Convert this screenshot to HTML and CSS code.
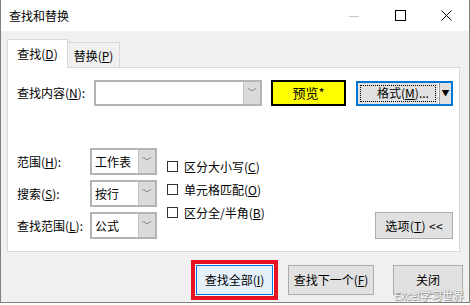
FILE: index.html
```html
<!DOCTYPE html>
<html lang="zh-CN">
  <head>
    <meta charset="UTF-8" />
    <title>查找和替换</title>
    <link rel="stylesheet" href="styles.css">
  </head>
  <body>
    <div class="window">
      <!-- Title bar -->
      <div class="titlebar">
        <span class="title">查找和替换</span>
        <div class="controls">
          <span class="ctl"><svg width="10" height="10" viewBox="0 0 10 10"><path d="M0 5.5h10" stroke="#c8c8c8" stroke-width="1"/></svg></span>
          <span class="ctl"><svg width="11" height="11" viewBox="0 0 11 11"><rect x="0.5" y="0.5" width="10" height="10" fill="none" stroke="#000" stroke-width="1"/></svg></span>
          <span class="ctl"><svg width="11" height="11" viewBox="0 0 11 11"><path d="M0.5 0.5l10 10M10.5 0.5l-10 10" stroke="#000" stroke-width="1"/></svg></span>
        </div>
      </div>

      <div class="main">
        <!-- Tabs -->
        <div class="tabs">
          <div class="tab active">查找(<u>D</u>)</div>
          <div class="tab">替换(<u>P</u>)</div>
        </div>

        <div class="panel">
          <div class="find-row">
            <label class="label">查找内容(<u>N</u>):</label>
            <div class="combo find-combo">
              <span class="combo-text"></span>
              <span class="combo-btn">﹀</span>
            </div>
            <div class="preview">预览*</div>
            <div class="format-btn">
              <span class="format-main"><span class="focus">格式(<u>M</u>)...</span></span>
              <span class="format-arrow">▼</span>
            </div>
          </div>

          <div class="options">
            <div class="selects">
              <label class="label">范围(<u>H</u>):</label>
              <div class="combo"><span class="combo-text">工作表</span><span class="combo-btn">﹀</span></div>
              <label class="label">搜索(<u>S</u>):</label>
              <div class="combo"><span class="combo-text">按行</span><span class="combo-btn">﹀</span></div>
              <label class="label">查找范围(<u>L</u>):</label>
              <div class="combo"><span class="combo-text">公式</span><span class="combo-btn">﹀</span></div>
            </div>

            <div class="checks">
              <div class="check"><span class="box"></span>区分大小写(<u>C</u>)</div>
              <div class="check"><span class="box"></span>单元格匹配(<u>O</u>)</div>
              <div class="check"><span class="box"></span>区分全/半角(<u>B</u>)</div>
            </div>

            <div class="btn options-btn">选项(<u>T</u>) &lt;&lt;</div>
          </div>
        </div>

        <!-- Dialog buttons -->
        <div class="buttons">
          <div class="highlight"><div class="btn default">查找全部(<u>I</u>)</div></div>
          <div class="btn next">查找下一个(<u>F</u>)</div>
          <div class="btn close">关闭</div>
        </div>
      </div>

      <div class="watermark">Excel学习世界</div>
    </div>
  </body>
</html>
```

FILE: styles.css
```css
html,
body {
  margin: 0;
  padding: 0;
  background: #fff;
}
body {
  font-family: "Noto Sans CJK SC", "Noto Sans", sans-serif;
  font-size: 12px;
  color: #000;
  line-height: 16px;
}
u {
  text-decoration-thickness: 1px;
  text-underline-offset: 1px;
}
.window {
  position: relative;
  width: 470px;
  height: 303px;
  box-sizing: border-box;
  border-left: 1px solid #808080;
  border-right: 1px solid #808080;
  border-bottom: 1px solid #808080;
  display: flex;
  flex-direction: column;
  background: #f0f0f0;
}
.titlebar {
  height: 31px;
  background: #fff;
  display: flex;
  align-items: center;
  padding-left: 8px;
}
.title {
  flex: 1;
}
.controls {
  display: flex;
  align-items: center;
}
.ctl {
  width: 46px;
  display: flex;
  justify-content: center;
}
.ctl svg {
  display: block;
}
.main {
  flex: 1;
  padding: 9px 6px 0 6px;
}
.tabs {
  display: flex;
  align-items: flex-end;
  height: 27px;
}
.tab {
  height: 25px;
  border: 1px solid #d9d9d9;
  border-bottom: none;
  box-sizing: border-box;
  display: flex;
  align-items: center;
  justify-content: center;
  white-space: nowrap;
}
.tab.active {
  height: 29px;
  width: 61px;
  background: #fff;
  margin-bottom: -1px;
  position: relative;
  z-index: 1;
  padding-bottom: 1px;
}
.tab:not(.active) {
  border-left: none;
  width: 52px;
  padding-top: 1px;
}
.panel {
  width: 453px;
  height: 185px;
  box-sizing: border-box;
  background: #fff;
  border: 1px solid #d9d9d9;
  padding: 12px 6px 0 9px;
}
.find-row {
  display: flex;
  align-items: center;
  height: 26px;
}
.find-row .label {
  width: 77px;
}
.combo {
  display: flex;
  height: 27px;
  box-sizing: border-box;
  border: 2px solid #b4b4b4;
  background: #fff;
}
.find-combo {
  width: 168px;
  height: 26px;
}
.combo-text {
  flex: 1;
  padding-left: 3px;
  display: flex;
  align-items: center;
}
.combo-btn {
  width: 16px;
  background: #dadada;
  border-left: 1px solid #c4c4c4;
  color: #707070;
  font-size: 9px;
  display: flex;
  align-items: center;
  justify-content: center;
}
.preview {
  margin-left: 9px;
  width: 75px;
  height: 26px;
  box-sizing: border-box;
  background: #ffff00;
  border: 2px solid #000;
  display: flex;
  align-items: center;
  justify-content: center;
  font-size: 13px;
}
.format-btn {
  margin-left: 10px;
  width: 97px;
  height: 25px;
  box-sizing: border-box;
  border: 2px solid #0078d7;
  background: #e1e1e1;
  display: flex;
}
.format-main {
  flex: 1;
  padding: 2px;
  border-right: 1px solid #fff;
  display: flex;
}
.focus {
  flex: 1;
  border: 1px dotted #000;
  display: flex;
  align-items: center;
  justify-content: center;
  padding-left: 10px;
}
.format-arrow {
  width: 11px;
  font-size: 8px;
  display: flex;
  align-items: center;
  justify-content: center;
  border-left: 1px solid #a0a0a0;
}
.options {
  display: flex;
  margin-top: 42px;
  height: 92px;
}
.selects {
  display: grid;
  grid-template-columns: 73px 67px;
  grid-auto-rows: 27px;
  row-gap: 5px;
  align-items: center;
}
.checks {
  margin-left: 10px;
  padding-top: 7px;
  display: flex;
  flex-direction: column;
}
.check {
  height: 23px;
  display: flex;
  align-items: center;
}
.box {
  width: 11px;
  height: 11px;
  box-sizing: border-box;
  border: 1px solid #333;
  background: #fff;
  margin-right: 6px;
}
.btn {
  box-sizing: border-box;
  background: #e1e1e1;
  border: 1px solid #adadad;
  display: flex;
  align-items: center;
  justify-content: center;
}
.options-btn {
  margin-left: auto;
  align-self: flex-end;
  margin-bottom: 1px;
  width: 78px;
  height: 27px;
  letter-spacing: 0.3px;
}
.buttons {
  display: flex;
  align-items: center;
  margin-top: 13px;
  padding-left: 184px;
}
.highlight {
  border: 4px solid #e81123;
  padding: 1px;
  background: #fff;
  margin: -5px 0;
}
.btn.default {
  width: 77px;
  height: 30px;
  background: #e5f1fb;
  border-color: #0078d7;
}
.btn.next {
  width: 91px;
  height: 30px;
  margin-left: 10px;
}
.btn.close {
  width: 74px;
  height: 30px;
  margin-left: 19px;
}
.watermark {
  position: absolute;
  right: 5px;
  bottom: 1px;
  font-size: 11px;
  line-height: 12px;
  color: #fff;
  text-shadow: 0 0 1px #777, 1px 1px 1px #888;
}
```
